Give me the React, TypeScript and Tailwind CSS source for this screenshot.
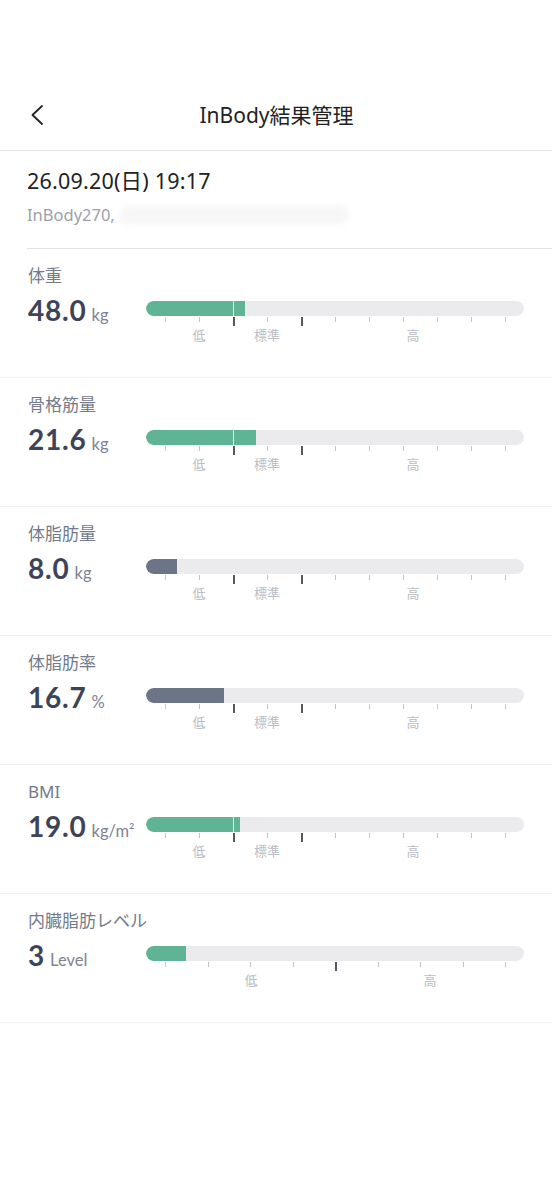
import React from "react";

type Item = {
  label: string;
  value: string;
  unit: string;
  fill: number;
  color: string;
  visceral?: boolean;
};

const items: Item[] = [
  { label: "体重", value: "48.0", unit: "kg", fill: 99, color: "#5fb496" },
  { label: "骨格筋量", value: "21.6", unit: "kg", fill: 110, color: "#5fb496" },
  { label: "体脂肪量", value: "8.0", unit: "kg", fill: 31, color: "#6c7587" },
  { label: "体脂肪率", value: "16.7", unit: "%", fill: 78, color: "#6c7587" },
  { label: "BMI", value: "19.0", unit: "kg/m²", fill: 94, color: "#5fb496" },
  { label: "内臓脂肪レベル", value: "3", unit: "Level", fill: 40, color: "#5fb496", visceral: true },
];

const JP = { fontFamily: '"Noto Sans", "Noto Sans CJK JP", sans-serif' };
const NUM = { fontFamily: 'Lato, "Noto Sans CJK JP", sans-serif' };

function Scale({ item }: { item: Item }) {
  const ticks: { x: number; big: boolean }[] = [];
  if (item.visceral) {
    for (let i = 0; i < 9; i++) ticks.push({ x: 19 + i * 42.5, big: i === 4 });
  } else {
    for (let i = 0; i < 11; i++) ticks.push({ x: 19 + i * 34, big: i === 2 || i === 4 });
  }
  const labels = item.visceral
    ? [
        { t: "低", x: 105 },
        { t: "高", x: 284 },
      ]
    : [
        { t: "低", x: 53 },
        { t: "標準", x: 121 },
        { t: "高", x: 267 },
      ];
  return (
    <div className="relative w-[378px] h-[40px]">
      <div className="relative h-[15px] w-full rounded-full bg-[#ebebee] overflow-hidden">
        <div
          className="absolute left-0 top-0 h-full rounded-l-full"
          style={{ width: item.fill, backgroundColor: item.color }}
        />
        {!item.visceral && item.fill > 87 && (
          <div className="absolute top-0 h-full w-px bg-white/80" style={{ left: 87 }} />
        )}
      </div>
      {ticks.map((t, i) => (
        <div
          key={i}
          className={
            t.big
              ? "absolute top-[16px] h-[9px] w-[1.5px] bg-[#55585f]"
              : "absolute top-[16px] h-[5px] w-px bg-[#c3c5c9]"
          }
          style={{ left: t.x }}
        />
      ))}
      {labels.map((l, i) => (
        <div
          key={i}
          className="absolute top-[26px] -translate-x-1/2 text-[13px] leading-[16px] text-[#babdc3] whitespace-nowrap"
          style={{ left: l.x, ...JP }}
        >
          {l.t}
        </div>
      ))}
    </div>
  );
}

function Section({ item }: { item: Item }) {
  return (
    <div className="h-[129px] border-b border-[#f1f1f3] pl-[28px] pt-[16px]">
      <div className="text-[17px] leading-[22px] text-[#737a8a]" style={JP}>
        {item.label}
      </div>
      <div className="flex mt-[14px]">
        <div className="w-[118px] h-[15px] flex items-center">
          <div className="flex items-baseline whitespace-nowrap mt-[2px]">
            <span className="text-[28px] leading-none font-bold tracking-[0.8px] text-[#3e4458]" style={NUM}>
              {item.value}
            </span>
            <span className="ml-[5px] text-[16.5px] leading-none text-[#7d8393]" style={NUM}>
              {item.unit}
            </span>
          </div>
        </div>
        <Scale item={item} />
      </div>
    </div>
  );
}

export default function App() {
  return (
    <div className="w-[552px] min-h-[1200px] bg-white" style={JP}>
      <div className="h-[151px] border-b border-[#e4e4e6] flex flex-col justify-end">
        <div className="relative h-[70px] flex items-center justify-center">
          <svg
            className="absolute left-[30px] top-[25px]"
            width="14"
            height="20"
            viewBox="0 0 14 20"
            fill="none"
          >
            <path d="M12 1 L2.5 10 L12 19" stroke="#222" strokeWidth="1.8" strokeLinecap="round" strokeLinejoin="round" />
          </svg>
          <div className="text-[21px] leading-[26px] text-[#222] ml-[1px]" style={JP}>
            InBody結果管理
          </div>
        </div>
      </div>
      <div className="ml-[27px] border-b border-[#e2e2e4] pt-[17px] pb-[23px]">
        <div className="text-[21.5px] leading-[26px] text-[#222] tracking-[0.2px]" style={JP}>
          26.09.20(日) 19:17
        </div>
        <div className="mt-[11px] flex items-center">
          <span className="text-[16.5px] leading-[20px] text-[#9ca1aa]" style={JP}>
            InBody270,
          </span>
          <div className="ml-[4px] h-[18px] w-[230px] rounded-full bg-[#f6f6f7] blur-[3px]" />
        </div>
      </div>
      {items.map((it, i) => (
        <Section key={i} item={it} />
      ))}
    </div>
  );
}
